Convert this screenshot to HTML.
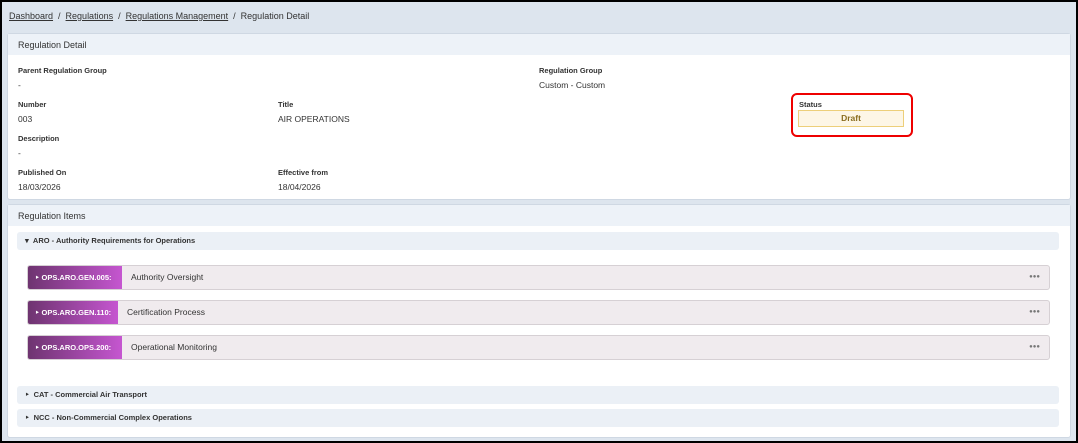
<!DOCTYPE html>
<html><head><style>
*{box-sizing:border-box;margin:0;padding:0}
body{width:1078px;height:443px;overflow:hidden;background:#000;font-family:"Liberation Sans",sans-serif;color:#333;}
.frame{position:absolute;left:2px;top:2px;width:1074px;height:439px;background:#dde5ee;}
.abs{position:absolute}
.bc{left:9px;top:11px;font-size:9px;color:#333}
.card{background:#fff;border:1px solid #cfd8e3;border-radius:3px}
.ch{background:#edf2f8;height:21px;font-size:9px;padding:6px 10px;color:#333}
.lbl{font-size:7.5px;font-weight:bold;color:#333}
.val{font-size:8.5px;color:#333}
.grp{background:#ebf0f6;border-radius:3px;font-size:7.5px;font-weight:bold;padding:0 0 0 8px;line-height:18px;color:#333}
.item{background:#f0ebee;border:1px solid #d6d0d4;border-radius:3px;height:25px;}
.code{position:absolute;left:0;top:0;height:23px;background:linear-gradient(90deg,#6e3470,#c556d0);color:#fff;font-size:7.5px;font-weight:bold;line-height:23px;padding-left:7px;border-radius:2px 0 0 2px}
.it{position:absolute;top:0;line-height:23px;font-size:8.5px;color:#333}
.dots{position:absolute;right:9px;top:0;line-height:23px;font-size:6px;color:#777;letter-spacing:0}
</style></head><body>
<div class="frame"></div>
<div class="abs bc"><u>Dashboard</u> &nbsp;/ &nbsp;<u>Regulations</u> &nbsp;/ &nbsp;<u>Regulations Management</u> &nbsp;/ &nbsp;Regulation Detail</div>
<div class="abs card" style="left:7px;top:33px;width:1064px;height:167px">
<div class="ch">Regulation Detail</div>
</div>
<div class="abs lbl" style="left:18px;top:66px">Parent Regulation Group</div>
<div class="abs val" style="left:18px;top:80px">-</div>
<div class="abs lbl" style="left:539px;top:66px">Regulation Group</div>
<div class="abs val" style="left:539px;top:80px">Custom - Custom</div>
<div class="abs lbl" style="left:18px;top:100px">Number</div>
<div class="abs val" style="left:18px;top:114px">003</div>
<div class="abs lbl" style="left:278px;top:100px">Title</div>
<div class="abs val" style="left:278px;top:114px">AIR OPERATIONS</div>
<div class="abs" style="left:791px;top:93px;width:122px;height:44px;border:2.5px solid #e00;border-radius:6px"></div>
<div class="abs lbl" style="left:799px;top:100px">Status</div>
<div class="abs" style="left:798px;top:110px;width:106px;height:17px;background:#fdf6e6;border:1px solid #edcf7a;font-size:8.5px;font-weight:bold;color:#8a6d1f;text-align:center;line-height:15px">Draft</div>
<div class="abs lbl" style="left:18px;top:134px">Description</div>
<div class="abs val" style="left:18px;top:148px">-</div>
<div class="abs lbl" style="left:18px;top:168px">Published On</div>
<div class="abs val" style="left:18px;top:182px">18/03/2026</div>
<div class="abs lbl" style="left:278px;top:168px">Effective from</div>
<div class="abs val" style="left:278px;top:182px">18/04/2026</div>

<div class="abs card" style="left:7px;top:204px;width:1064px;height:234px">
<div class="ch">Regulation Items</div>
</div>
<div class="abs grp" style="left:17px;top:232px;width:1042px">▾ &nbsp;ARO - Authority Requirements for Operations</div>
<div class="abs item" style="left:27px;top:265px;width:1023px"><div class="code" style="width:94px">‣ OPS.ARO.GEN.005:</div><div class="it" style="left:103px">Authority Oversight</div><div class="dots">●●●</div></div>
<div class="abs item" style="left:27px;top:300px;width:1023px"><div class="code" style="width:90px">‣ OPS.ARO.GEN.110:</div><div class="it" style="left:99px">Certification Process</div><div class="dots">●●●</div></div>
<div class="abs item" style="left:27px;top:335px;width:1023px"><div class="code" style="width:94px">‣ OPS.ARO.OPS.200:</div><div class="it" style="left:103px">Operational Monitoring</div><div class="dots">●●●</div></div>
<div class="abs grp" style="left:17px;top:386px;width:1042px">‣ &nbsp;CAT - Commercial Air Transport</div>
<div class="abs grp" style="left:17px;top:409px;width:1042px">‣ &nbsp;NCC - Non-Commercial Complex Operations</div>
</body></html>
